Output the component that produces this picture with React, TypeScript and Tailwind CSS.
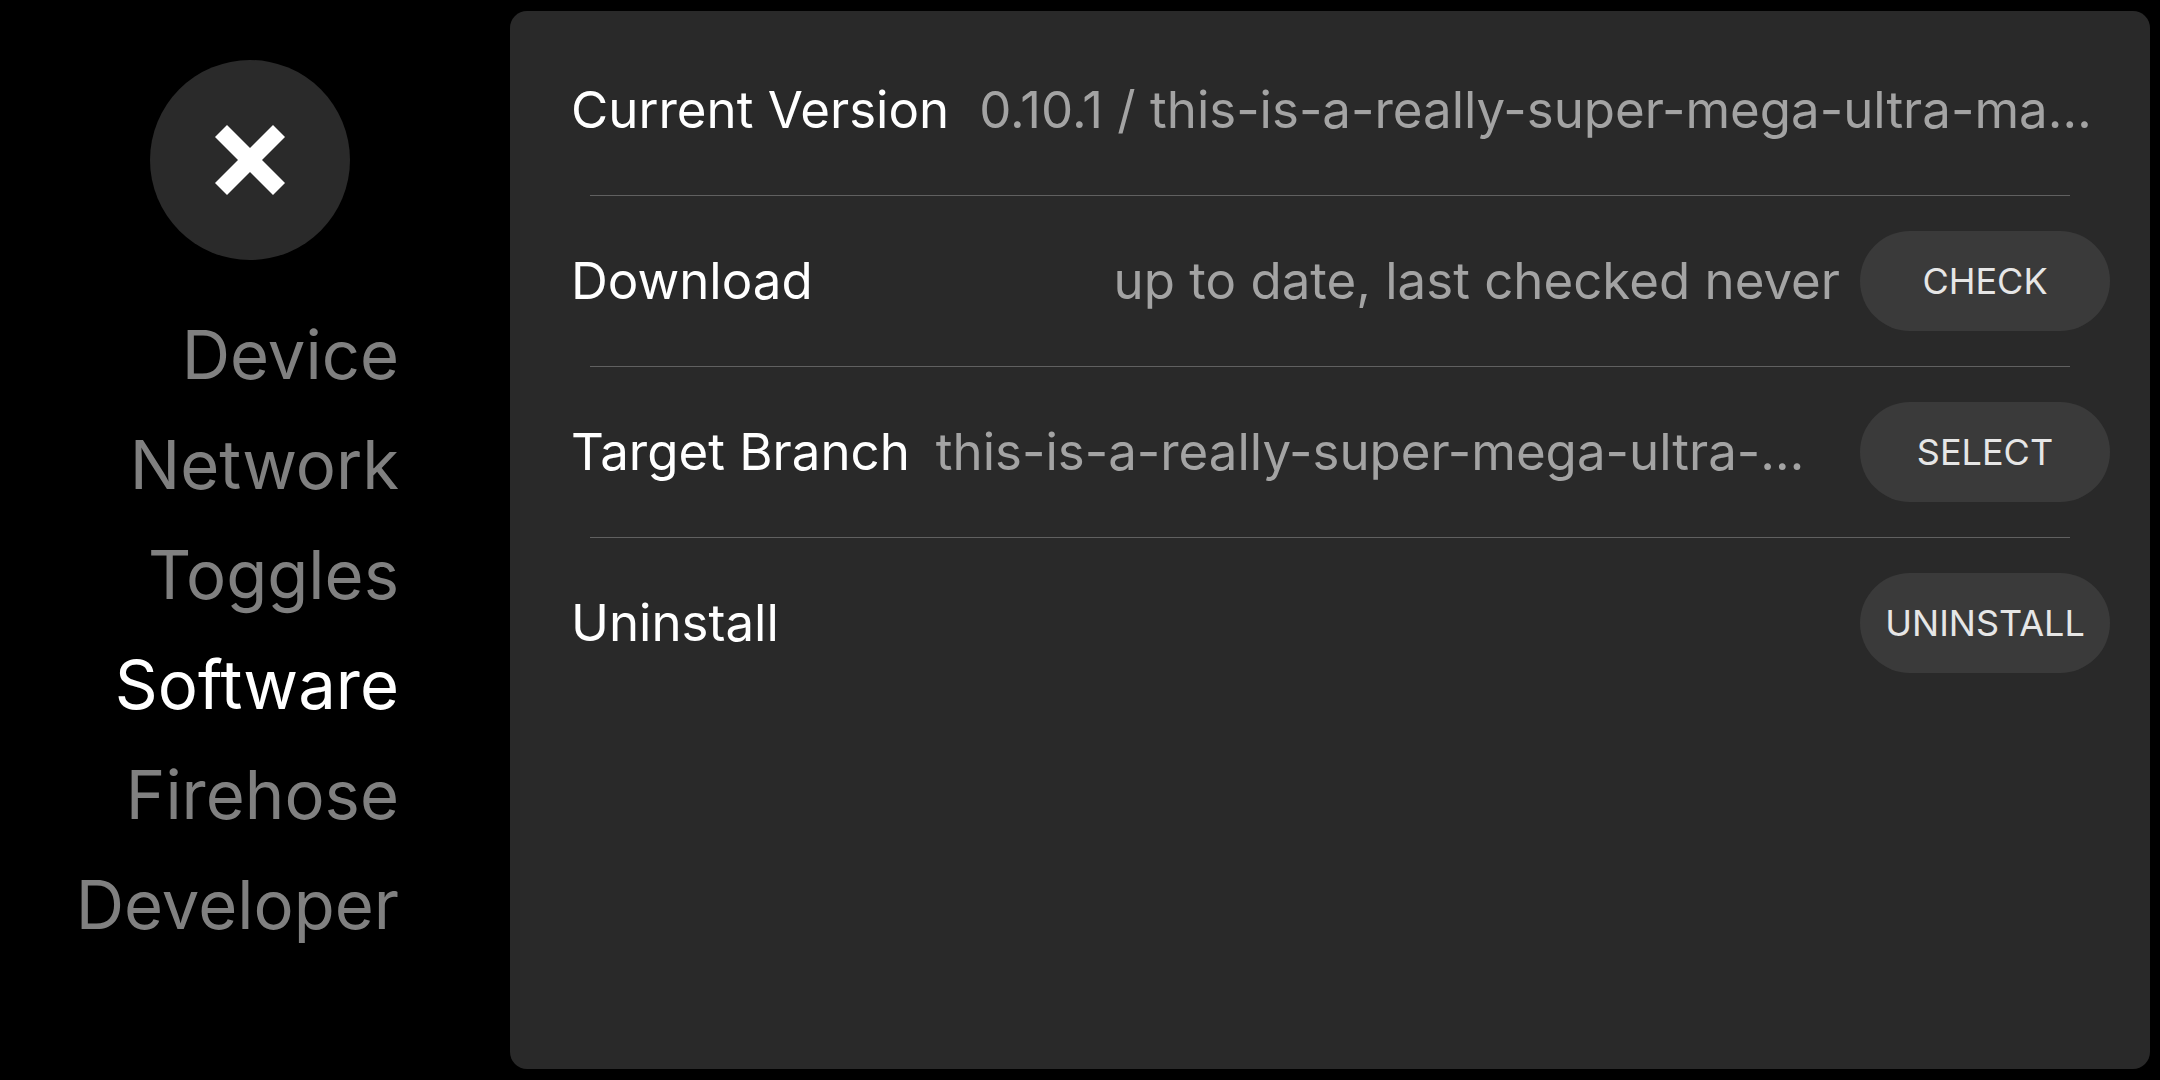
import React from "react";

const navItems = ["Device", "Network", "Toggles", "Software", "Firehose", "Developer"];

function Divider() {
  return <div className="mx-[80px] h-px bg-[#606060]" />;
}

function PillButton({ label }: { label: string }) {
  return (
    <button className="flex h-[100px] w-[250px] shrink-0 items-center justify-center rounded-full bg-[#3a3a3a] text-[36px] text-[#e6e6e6]">
      {label}
    </button>
  );
}

export default function App() {
  return (
    <div
      className="flex h-[1080px] w-[2160px] bg-black"
      style={{ fontFamily: "Inter, 'Noto Sans', sans-serif" }}
    >
      <div className="flex w-[500px] shrink-0 flex-col pt-[60px]">
        <div className="flex justify-center">
          <button className="flex h-[200px] w-[200px] items-center justify-center rounded-full bg-[#2a2a2a]">
            <svg width="70" height="70" viewBox="0 0 70 70">
              <line x1="6" y1="6" x2="64" y2="64" stroke="white" strokeWidth="17" />
              <line x1="64" y1="6" x2="6" y2="64" stroke="white" strokeWidth="17" />
            </svg>
          </button>
        </div>
        <div className="mt-[40px] flex flex-col items-end pr-[101px]">
          {navItems.map((n) => (
            <div
              key={n}
              className={
                "h-[110px] text-[67px] leading-[110px] " +
                (n === "Software" ? "text-white" : "text-[#808080]")
              }
            >
              {n}
            </div>
          ))}
        </div>
      </div>
      <div className="my-[11px] ml-[10px] mr-[10px] flex min-w-0 flex-1 flex-col rounded-[17px] bg-[#292929] pt-[14px]">
        <div className="flex h-[170px] items-center pl-[61px] pr-[40px] text-[51px]">
          <span className="shrink-0 text-white">Current Version</span>
          <span className="ml-[30px] min-w-0 flex-1 truncate text-[#a3a3a3]">
            0.10.1 / this-is-a-really-super-mega-ultra-massive-branch-name
          </span>
        </div>
        <Divider />
        <div className="flex h-[170px] items-center pl-[61px] pr-[40px] text-[51px]">
          <span className="shrink-0 text-white">Download</span>
          <span className="ml-[26px] min-w-0 flex-1 truncate text-right text-[#a3a3a3]">
            up to date, last checked never
          </span>
          <div className="ml-[20px]">
            <PillButton label="CHECK" />
          </div>
        </div>
        <Divider />
        <div className="flex h-[170px] items-center pl-[61px] pr-[40px] text-[51px]">
          <span className="shrink-0 text-white">Target Branch</span>
          <span className="ml-[26px] min-w-0 flex-1 truncate text-[#a3a3a3]">
            this-is-a-really-super-mega-ultra-massive-branch-name
          </span>
          <div className="ml-[20px]">
            <PillButton label="SELECT" />
          </div>
        </div>
        <Divider />
        <div className="flex h-[170px] items-center pl-[61px] pr-[40px] text-[51px]">
          <span className="shrink-0 text-white">Uninstall</span>
          <div className="flex-1" />
          <PillButton label="UNINSTALL" />
        </div>
      </div>
    </div>
  );
}
